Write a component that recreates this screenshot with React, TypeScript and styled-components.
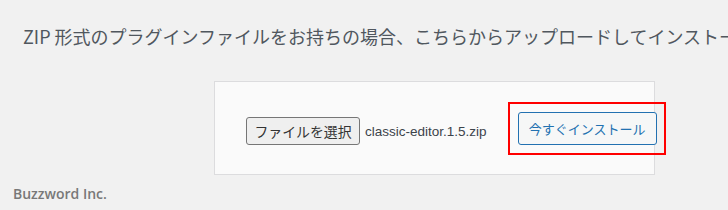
import React from 'react'
import styled, { createGlobalStyle } from 'styled-components'

const GlobalStyle = createGlobalStyle`
  html, body {
    margin: 0;
    padding: 0;
    background: #f1f1f1;
  }
  body {
    font-family: "Noto Sans CJK JP", "Liberation Sans", sans-serif;
  }
`

const Page = styled.div`
  width: 728px;
  height: 210px;
  overflow: hidden;
  display: flex;
  flex-direction: column;
`

const InstallHelp = styled.p`
  margin: 0;
  padding: 24px 0 0 23px;
  font-size: 18px;
  line-height: 24px;
  color: #50575e;
  white-space: nowrap;
  overflow: hidden;
`

const UploadForm = styled.form`
  box-sizing: border-box;
  display: flex;
  align-items: flex-end;
  width: 441px;
  height: 94px;
  margin: 33px 0 0 214px;
  padding: 30px 31px 29px;
  border: 1px solid #dcdcde;
  background: #fafafa;
`

const FileField = styled.div`
  display: flex;
  flex-shrink: 0;
  align-items: center;
  height: 28px;
  white-space: nowrap;
`

const ChooseButton = styled.span`
  box-sizing: border-box;
  display: flex;
  flex-shrink: 0;
  align-items: center;
  justify-content: center;
  width: 114px;
  height: 28px;
  border: 1px solid #767676;
  border-radius: 3px;
  background: #efefef;
  color: #333;
  font-size: 13.9px;
  white-space: nowrap;
`

const FileName = styled.span`
  margin-left: 5px;
  font-family: "Liberation Sans", Arial, sans-serif;
  font-size: 13.5px;
  color: #3c434a;
  white-space: nowrap;
`

const Highlight = styled.div`
  position: relative;
  flex-shrink: 0;
  margin-left: 31px;
  &::after {
    content: '';
    position: absolute;
    top: -10px;
    left: -10px;
    right: -9px;
    bottom: -10px;
    border: 2px solid #ff0000;
    pointer-events: none;
  }
`

const SubmitButton = styled.button`
  box-sizing: border-box;
  display: block;
  width: 139px;
  height: 33px;
  padding: 0;
  border: 1px solid #2271b1;
  border-radius: 3px;
  background: #f6f7f7;
  color: #2271b1;
  font-family: "Noto Sans CJK JP", sans-serif;
  font-size: 13px;
  white-space: nowrap;
  cursor: pointer;
`

const Credit = styled.div`
  margin: 10px 0 0 13px;
  font-family: "Open Sans", "Liberation Sans", sans-serif;
  font-weight: 600;
  font-size: 14px;
  line-height: 18px;
  color: #787878;
`

export default function App() {
  return (
    <>
      <GlobalStyle />
      <Page>
        <InstallHelp>
          ZIP 形式のプラグインファイルをお持ちの場合、こちらからアップロードしてインストールできます。
        </InstallHelp>
        <UploadForm onSubmit={(e) => e.preventDefault()}>
          <FileField>
            <ChooseButton>ファイルを選択</ChooseButton>
            <FileName>classic-editor.1.5.zip</FileName>
          </FileField>
          <Highlight>
            <SubmitButton type="submit">今すぐインストール</SubmitButton>
          </Highlight>
        </UploadForm>
        <Credit>Buzzword Inc.</Credit>
      </Page>
    </>
  )
}
